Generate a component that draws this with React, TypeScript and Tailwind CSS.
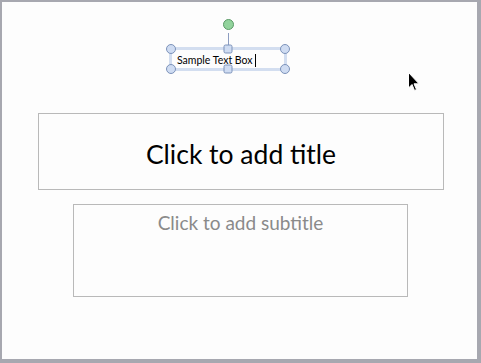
import React from "react";

const circle = "absolute w-[10px] h-[10px] rounded-full border border-[#7d93ba] bg-[#cfdcf2] -translate-x-1/2 -translate-y-1/2";
const square = "absolute w-[9px] h-[9px] rounded-[2px] border border-[#7d93ba] bg-[#cfdcf2] -translate-x-1/2 -translate-y-1/2";

export default function App() {
  return (
    <div
      className="w-[481px] h-[363px] bg-[#fdfdfd] border-l-2 border-t-2 border-r-4 border-b-4 border-[#a7a8b0] relative overflow-hidden"
      style={{ fontFamily: "Lato, 'Noto Sans', sans-serif" }}
    >
      <div className="flex flex-col pt-[111px]">
        <div className="ml-[36px] w-[406px] h-[77px] border border-[#b9b9b9] flex items-center justify-center">
          <span className="text-[26.5px] text-black leading-none mt-[6px]">Click to add title</span>
        </div>
        <div className="ml-[71px] mt-[14px] w-[335px] h-[93px] border border-[#b9b9b9] flex justify-center">
          <span className="text-[19px] text-[#8a8a8a] leading-none mt-[8px]">Click to add subtitle</span>
        </div>
      </div>

      {/* Selected text box (floating object on the slide) */}
      <div className="absolute left-[169px] top-[47px] w-[114px] h-[20px]">
        <div className="absolute inset-[-2px] border-[3px] border-[#d3def0]" />
        <div className="relative flex items-center h-full pl-[6px] pt-[3px]">
          <span className="text-[10.5px] leading-none text-black whitespace-nowrap">Sample Text Box</span>
          <span className="w-px h-[13px] bg-black ml-[2px] -mt-[1px]" />
        </div>
        {/* rotation handle */}
        <div className="absolute left-1/2 bottom-full w-px h-[16px] bg-[#8c9cc0]" />
        <div className="absolute left-[52px] top-[-30px] w-[11px] h-[11px] rounded-full border border-[#5b9a67] bg-[#92d39c]" />
        <div className={`${circle} left-0 top-0`} />
        <div className={`${square} left-1/2 top-0`} />
        <div className={`${circle} left-full top-0`} />
        <div className={`${circle} left-0 top-full`} />
        <div className={`${square} left-1/2 top-full`} />
        <div className={`${circle} left-full top-full`} />
      </div>

      {/* Mouse pointer */}
      <svg className="absolute left-[406px] top-[70px]" width="13" height="20" viewBox="0 0 13 20">
        <path d="M0.5 0.5 L0.5 16 L4 12.5 L6.5 18.5 L8.5 17.5 L6 11.8 L11 11.8 Z" fill="#000" stroke="#fff" strokeWidth="1" />
      </svg>
    </div>
  );
}
